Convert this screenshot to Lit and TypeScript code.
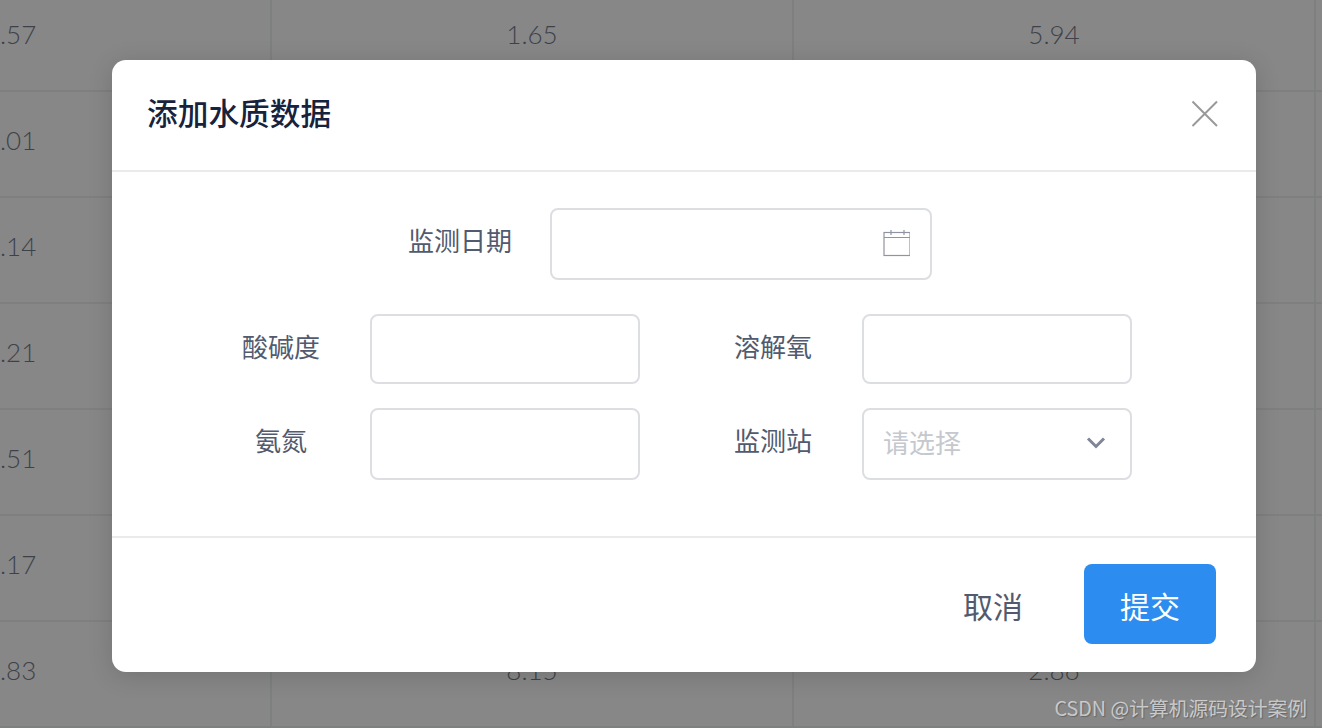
import { LitElement, html, css } from "lit";
import { customElement } from "lit/decorators.js";

const rows = [
  [".57", "1.65", "5.94"],
  [".01", "", ""],
  [".14", "", ""],
  [".21", "", ""],
  [".51", "", ""],
  [".17", "", ""],
  [".83", "8.15", "2.86"],
];

@customElement("app-root")
export class AppRoot extends LitElement {
  static styles = css`
    :host {
      display: block;
      position: relative;
      width: 1322px;
      height: 728px;
      overflow: hidden;
      font-family: "Noto Sans CJK SC", "Noto Sans", sans-serif;
      background: #fff;
    }
    .table {
      display: grid;
      grid-template-columns: 272px 522px 522px 6px;
      grid-auto-rows: 106px;
      margin-top: -14px;
      font-family: Lato, "Noto Sans", sans-serif;
      font-weight: 300;
      color: #4a5266;
      font-size: 26px;
    }
    .cell {
      box-sizing: border-box;
      border-right: 2px solid #e8eaec;
      border-bottom: 2px solid #e8eaec;
      display: flex;
      align-items: center;
      justify-content: center;
      padding-bottom: 8px;
    }
    .cell.first {
      justify-content: flex-start;
    }
    .cell.last {
      border-right: 0;
    }
    .overlay {
      position: absolute;
      inset: 0;
      background: rgba(55, 55, 55, 0.6);
    }
    .wrap {
      position: absolute;
      inset: 0;
      display: flex;
      flex-direction: column;
      align-items: flex-start;
      padding: 60px 0 0 112px;
    }
    .dialog {
      position: relative;
      width: 1144px;
      height: 612px;
      background: #fff;
      border-radius: 14px;
      box-shadow: 0 4px 24px rgba(0, 0, 0, 0.15);
      display: flex;
      flex-direction: column;
    }
    .head {
      box-sizing: border-box;
      height: 112px;
      border-bottom: 2px solid #ebebeb;
      padding: 0 36px 0 35px;
      display: flex;
      align-items: center;
      justify-content: space-between;
    }
    .title {
      font-size: 30.7px;
      font-weight: 500;
      color: #17233d;
      line-height: 40px;
      margin-top: -6px;
    }
    .close {
      display: block;
      margin-right: 1px;
      margin-top: -2px;
    }
    .body {
      box-sizing: border-box;
      height: 366px;
      border-bottom: 2px solid #e8eaec;
      padding-top: 36px;
      display: flex;
      flex-direction: column;
    }
    .row {
      display: flex;
    }
    .r1 {
      height: 106px;
    }
    .r2 {
      height: 94px;
    }
    .field {
      display: flex;
    }
    .lab {
      box-sizing: border-box;
      width: 180px;
      padding-left: 2px;
      font-size: 26px;
      color: #515a6e;
      line-height: 64px;
      text-align: center;
    }
    .lab.date {
      padding-left: 0;
    }
    .box {
      box-sizing: border-box;
      width: 270px;
      height: 72px;
      border: 2px solid #dcdee2;
      border-radius: 8px;
      background: #fff;
      display: flex;
      align-items: center;
    }
    .box.wide {
      width: 382px;
    }
    .box.short {
      height: 70px;
    }
    .ml258 {
      margin-left: 258px;
    }
    .ml78 {
      margin-left: 78px;
    }
    .ml42 {
      margin-left: 42px;
    }
    .foot {
      flex: 1;
      display: flex;
      justify-content: flex-end;
      align-items: flex-start;
      padding: 26px 40px 0 0;
    }
    .btn {
      box-sizing: border-box;
      height: 80px;
      padding-top: 2px;
      font-size: 30px;
      border-radius: 8px;
      display: flex;
      align-items: center;
      justify-content: center;
    }
    .cancel {
      width: 120px;
      color: #515a6e;
      margin-right: 31px;
    }
    .ok {
      width: 132px;
      background: #2d8cf0;
      color: #fff;
    }
    .ph {
      font-size: 26px;
      color: #c5c8ce;
      margin-left: 19px;
      margin-top: -6px;
      flex: 1;
    }
    .spacer {
      flex: 1;
    }
    .cal {
      margin-right: 20px;
    }
    .chev {
      margin-right: 24px;
      margin-top: -2px;
    }
    .watermark {
      position: absolute;
      right: 15px;
      top: 693px;
      font-size: 19.75px;
      line-height: 30px;
      color: rgba(255, 255, 255, 0.62);
      text-shadow: 1px 1px 1px rgba(0, 0, 0, 0.25);
    }
  `;

  render() {
    const calendar = html`<span class="spacer"></span
      ><svg class="cal" width="28" height="28" viewBox="0 0 28 28" fill="none" stroke="#8f94a3" stroke-width="1.2">
        <rect x="2" y="2.5" width="26" height="23"></rect>
        <path d="M2 7.5h26M9 0v5M22 0v5"></path>
      </svg>`;
    const select = html`<span class="ph">请选择</span
      ><svg class="chev" width="20" height="12" viewBox="0 0 20 12" fill="none" stroke="#808695" stroke-width="3">
        <path d="M2 1.5l8 8 8-8"></path>
      </svg>`;
    return html`
      <div class="table">
        ${rows.map(
          (r) => html`
            <div class="cell first">${r[0]}</div>
            <div class="cell">${r[1]}</div>
            <div class="cell">${r[2]}</div>
            <div class="cell last"></div>
          `
        )}
      </div>
      <div class="overlay"></div>
      <div class="wrap">
        <div class="dialog">
          <div class="head">
            <span class="title">添加水质数据</span>
            <svg class="close" width="28" height="28" viewBox="0 0 28 28" stroke="#999" stroke-width="2" fill="none">
              <path d="M1.5 1.5l24.5 24.5M26 1.5l-24.5 24.5"></path>
            </svg>
          </div>
          <div class="body">
            <div class="row r1">
              <div class="field ml258">
                <div class="lab date">监测日期</div>
                <div class="box wide">${calendar}</div>
              </div>
            </div>
            <div class="row r2">
              <div class="field ml78">
                <div class="lab">酸碱度</div>
                <div class="box short"></div>
              </div>
              <div class="field ml42">
                <div class="lab">溶解氧</div>
                <div class="box short"></div>
              </div>
            </div>
            <div class="row">
              <div class="field ml78">
                <div class="lab">氨氮</div>
                <div class="box"></div>
              </div>
              <div class="field ml42">
                <div class="lab">监测站</div>
                <div class="box">${select}</div>
              </div>
            </div>
          </div>
          <div class="foot">
            <div class="btn cancel">取消</div>
            <div class="btn ok">提交</div>
          </div>
        </div>
      </div>
      <div class="watermark">CSDN @计算机源码设计案例</div>
    `;
  }
}
